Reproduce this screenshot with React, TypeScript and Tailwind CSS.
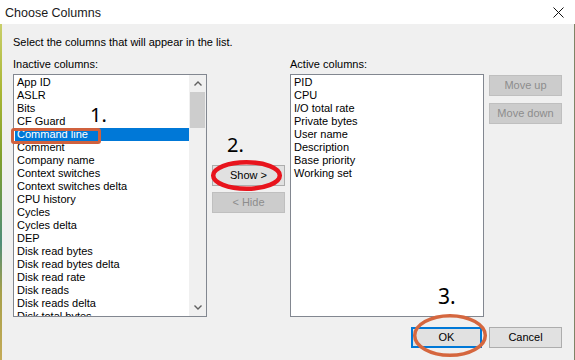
import React from "react";

const inactiveColumns = [
  "App ID",
  "ASLR",
  "Bits",
  "CF Guard",
  "Command line",
  "Comment",
  "Company name",
  "Context switches",
  "Context switches delta",
  "CPU history",
  "Cycles",
  "Cycles delta",
  "DEP",
  "Disk read bytes",
  "Disk read bytes delta",
  "Disk read rate",
  "Disk reads",
  "Disk reads delta",
  "Disk total bytes",
];

const activeColumns = [
  "PID",
  "CPU",
  "I/O total rate",
  "Private bytes",
  "User name",
  "Description",
  "Base priority",
  "Working set",
];

const Button = ({ label, disabled = false }: { label: string; disabled?: boolean }) => (
  <div
    className={
      disabled
        ? "flex h-[21px] w-[73px] items-center justify-center border border-[#bfbfbf] bg-[#cccccc] text-[#8d8d8d]"
        : "flex h-[21px] w-[73px] items-center justify-center border border-[#adadad] bg-[#e1e1e1]"
    }
  >
    {label}
  </div>
);

export default function App() {
  return (
    <div className="relative h-[360px] w-[575px] overflow-hidden bg-[#f0f0f0] font-['Liberation_Sans',Arial,sans-serif] text-[11px] leading-[15px] text-black">
      {/* TITLE BAR */}
      <div className="flex h-[24px] items-center justify-between bg-white pl-[5px] pr-[10px]">
        <span className="pt-[1px] text-[12.5px] leading-[18px] text-[#1a1a1a]">Choose Columns</span>
        <svg width="11" height="11" viewBox="0 0 11 11" className="mr-[1px]">
          <path d="M0.5 0.5 L10.5 10.5 M10.5 0.5 L0.5 10.5" stroke="#111" strokeWidth="1" />
        </svg>
      </div>

      <div className="flex h-[336px]">
        {/* desktop showing through at the left edge */}
        <div className="w-[2px] bg-[linear-gradient(to_bottom,#c9cf6a,#a9b634_20%,#7f9f2c_40%,#4f8d78_65%,#a7a04a_80%,#c4ab58)]" />

        <div className="flex flex-1 flex-col border-r border-[#7f8466] pl-[11px] pr-[12px]">
          <p className="mt-[11px]">Select the columns that will appear in the list.</p>

          <div className="mt-[7px] flex gap-[5px]">
            {/* INACTIVE LIST */}
            <div className="flex w-[194px] flex-col">
              <span className="h-[17px]">Inactive columns:</span>
              <div className="flex h-[243px] border border-[#828790] bg-white">
                <div className="flex-1 overflow-hidden pl-[1px] pt-[1px] leading-[13px]">
                  {inactiveColumns.map((name) =>
                    name === "Command line" ? (
                      <div key={name} className="h-[13px] bg-[#0078d7] pl-[2px] text-white">
                        {name}
                      </div>
                    ) : (
                      <div key={name} className="h-[13px] whitespace-nowrap pl-[2px]">
                        {name}
                      </div>
                    )
                  )}
                </div>
                <div className="flex w-[17px] flex-col bg-[#f0f0f0]">
                  <div className="flex h-[17px] items-center justify-center">
                    <svg width="8" height="5" viewBox="0 0 8 5">
                      <path d="M0.5 4.5 L4 1 L7.5 4.5" stroke="#606060" strokeWidth="1.4" fill="none" />
                    </svg>
                  </div>
                  <div className="mx-[1px] h-[36px] bg-[#cdcdcd]" />
                  <div className="flex-1" />
                  <div className="flex h-[17px] items-center justify-center">
                    <svg width="8" height="5" viewBox="0 0 8 5">
                      <path d="M0.5 0.5 L4 4 L7.5 0.5" stroke="#606060" strokeWidth="1.4" fill="none" />
                    </svg>
                  </div>
                </div>
              </div>
            </div>

            {/* SHOW / HIDE */}
            <div className="flex flex-col gap-[6px] pt-[108px]">
              <Button label="Show >" />
              <Button label="< Hide" disabled />
            </div>

            {/* ACTIVE LIST */}
            <div className="flex w-[194px] flex-col">
              <span className="h-[17px]">Active columns:</span>
              <div className="h-[243px] border border-[#828790] bg-white pl-[1px] pt-[1px] leading-[13px]">
                {activeColumns.map((name) => (
                  <div key={name} className="h-[13px] pl-[2px]">
                    {name}
                  </div>
                ))}
              </div>
            </div>

            {/* MOVE BUTTONS */}
            <div className="flex flex-col gap-[7px] pt-[18px]">
              <Button label="Move up" disabled />
              <Button label="Move down" disabled />
            </div>
          </div>

          {/* OK / CANCEL */}
          <div className="mb-[12px] mt-auto flex justify-end gap-[7px]">
            <div className="flex h-[21px] w-[71px] items-center justify-center border-2 border-[#0078d7] bg-[#e1e1e1]">
              OK
            </div>
            <Button label="Cancel" />
          </div>
        </div>
      </div>

      {/* ANNOTATIONS */}
      <div className="absolute left-[11px] top-[128px] h-[16px] w-[90px] rounded-[3px] border-[3px] border-[#d0613e]" />
      <span className="absolute left-[90px] top-[105px] font-['Noto_Sans',sans-serif] text-[20px] leading-[20px]">1.</span>
      <span className="absolute left-[227px] top-[135px] font-['Noto_Sans',sans-serif] text-[20px] leading-[20px]">2.</span>
      <span className="absolute left-[438px] top-[286px] font-['Noto_Sans',sans-serif] text-[21px] leading-[21px]">3.</span>
      <svg className="absolute left-0 top-0" width="575" height="360">
        <ellipse cx="246.5" cy="175.5" rx="33.3" ry="13.3" fill="none" stroke="#e8141d" strokeWidth="4.5" />
        <ellipse cx="450" cy="335.5" rx="35.3" ry="19.8" fill="none" stroke="#d5673f" strokeWidth="3.5" />
      </svg>
    </div>
  );
}
